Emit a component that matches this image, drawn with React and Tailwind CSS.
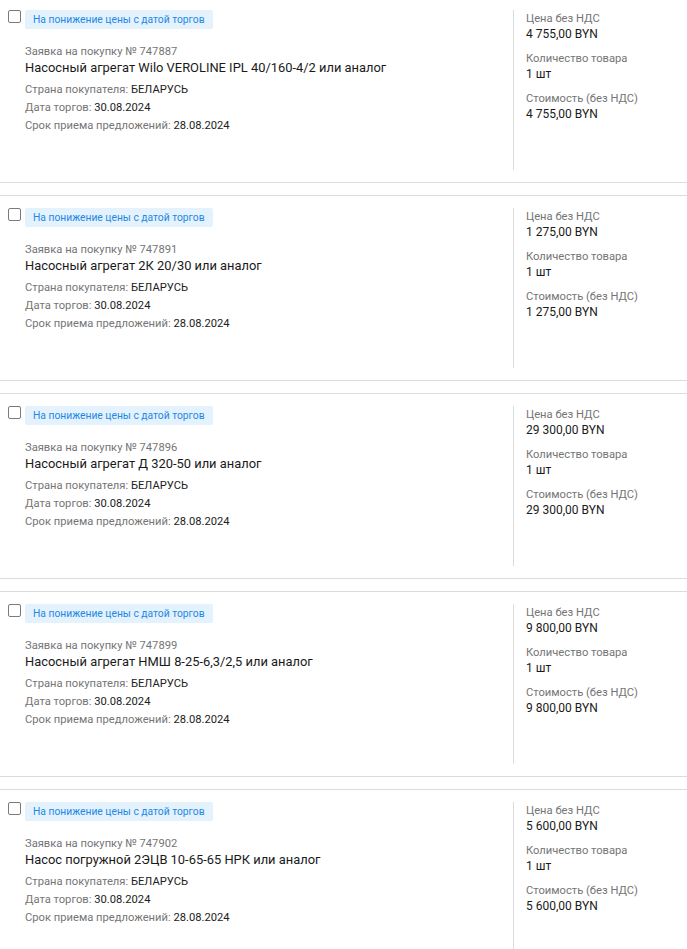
import React from "react";

const items = [
  { no: "747887", title: "Насосный агрегат Wilo VEROLINE IPL 40/160-4/2 или аналог", price: "4 755,00 BYN", total: "4 755,00 BYN" },
  { no: "747891", title: "Насосный агрегат 2К 20/30 или аналог", price: "1 275,00 BYN", total: "1 275,00 BYN" },
  { no: "747896", title: "Насосный агрегат Д 320-50 или аналог", price: "29 300,00 BYN", total: "29 300,00 BYN" },
  { no: "747899", title: "Насосный агрегат НМШ 8-25-6,3/2,5 или аналог", price: "9 800,00 BYN", total: "9 800,00 BYN" },
  { no: "747902", title: "Насос погружной 2ЭЦВ 10-65-65 НРК или аналог", price: "5 600,00 BYN", total: "5 600,00 BYN" },
];

function Card({ it }) {
  return (
    <div className="border-y border-[#dcdcdc] py-[12px] mb-[12px] flex">
      <div className="flex flex-1 pl-[8px] gap-[4px]">
        <div className="w-[13px] h-[13px] border border-[#7a7a7a] rounded-[2px] bg-white shrink-0" />
        <div className="flex flex-col">
          <div className="self-start bg-[#e3f2fd] text-[#1e88e5] text-[10.3px] leading-[19px] h-[19px] px-[8px] rounded-[2px]">
            На понижение цены с датой торгов
          </div>
          <div className="mt-[15px] -mb-[1px] text-[11.2px] leading-[16px] text-[#757575]">Заявка на покупку № {it.no}</div>
          <div className="text-[12.9px] leading-[18px] mb-[4px] text-[#1a1a1a]">{it.title}</div>
          <div className="text-[11.2px] leading-[18px] text-[#757575]">
            Страна покупателя: <span className="text-[#212121]">БЕЛАРУСЬ</span>
          </div>
          <div className="text-[11.2px] leading-[18px] text-[#757575]">
            Дата торгов: <span className="text-[#212121]">30.08.2024</span>
          </div>
          <div className="text-[11.2px] leading-[18px] text-[#757575]">
            Срок приема предложений: <span className="text-[#212121]">28.08.2024</span>
          </div>
        </div>
      </div>
      <div className="w-[174px] h-[160px] border-l border-[#dcdcdc] pl-[12px] flex flex-col gap-[8px]">
        <div>
          <div className="mt-[1px] text-[11.2px] leading-[15px] text-[#757575]">Цена без НДС</div>
          <div className="text-[12px] leading-[16px] text-[#1a1a1a]">{it.price}</div>
        </div>
        <div>
          <div className="mt-[1px] text-[11.2px] leading-[15px] text-[#757575]">Количество товара</div>
          <div className="text-[12px] leading-[16px] text-[#1a1a1a]">1 шт</div>
        </div>
        <div>
          <div className="mt-[1px] text-[11.2px] leading-[15px] text-[#757575]">Стоимость (без НДС)</div>
          <div className="text-[12px] leading-[16px] text-[#1a1a1a]">{it.total}</div>
        </div>
      </div>
    </div>
  );
}

export default function App() {
  return (
    <div className="bg-white min-h-screen overflow-hidden" style={{ fontFamily: "Roboto, 'Noto Sans', sans-serif" }}>
      <div className="-mt-[3px]">
        {items.map((it) => (
          <Card key={it.no} it={it} />
        ))}
      </div>
    </div>
  );
}
